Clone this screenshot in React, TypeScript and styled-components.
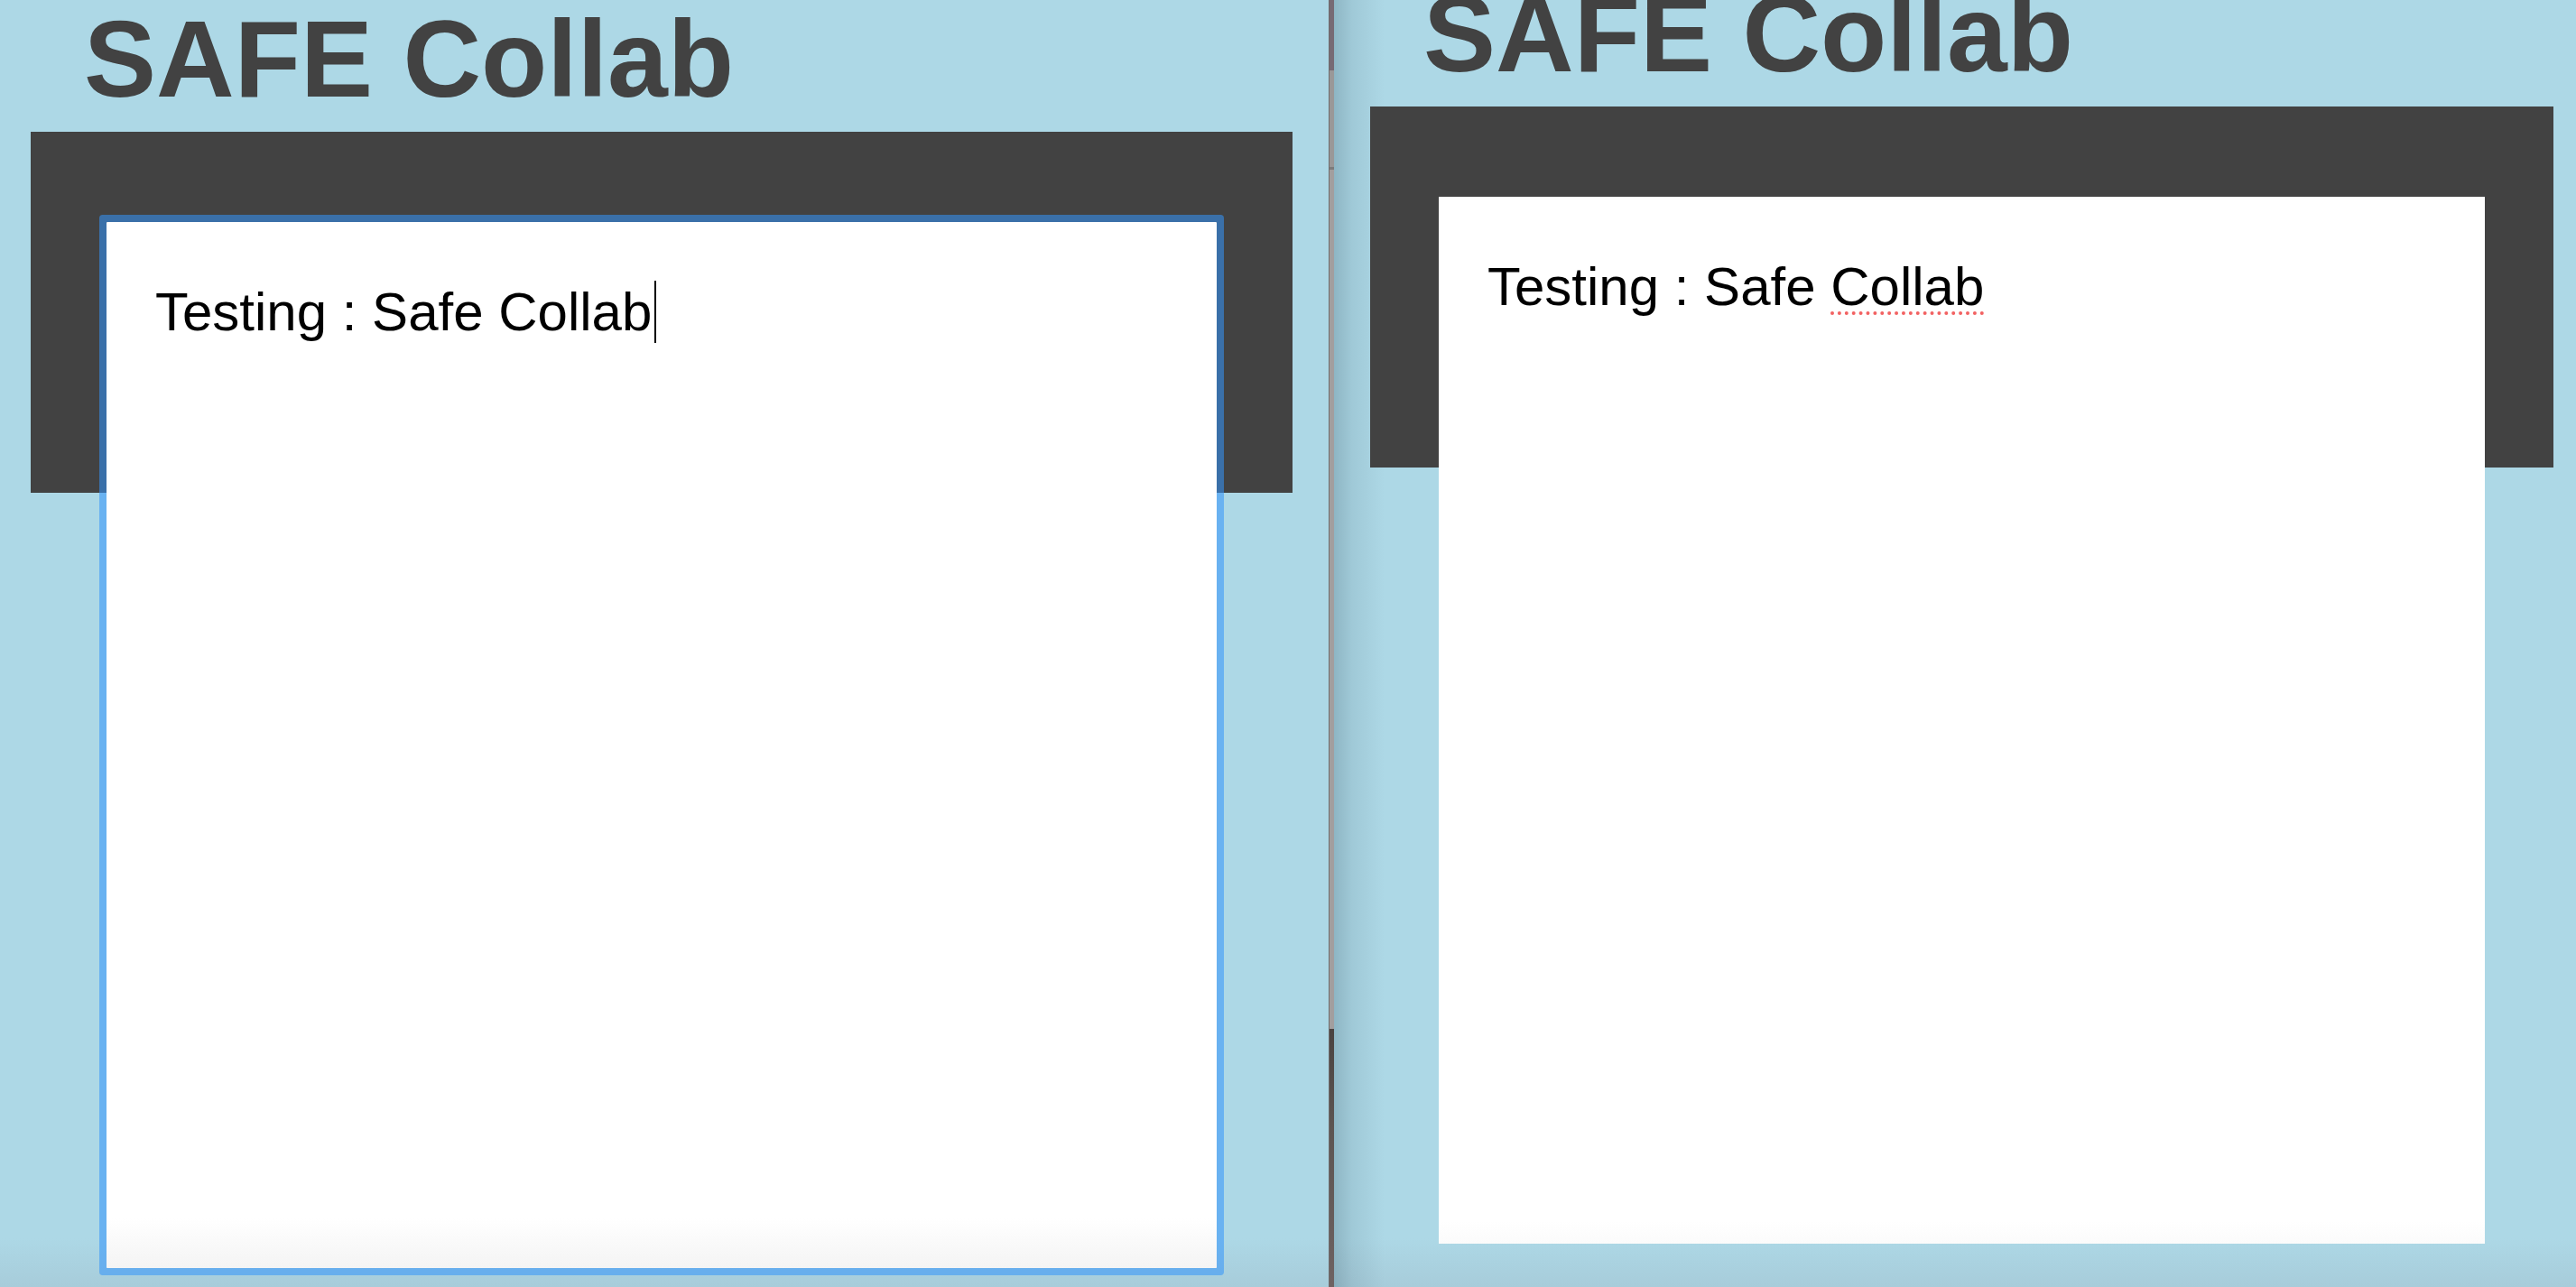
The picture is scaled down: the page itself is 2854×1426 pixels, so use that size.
import React from "react";
import styled, { createGlobalStyle, css } from "styled-components";

const GlobalStyle = createGlobalStyle`
  html, body {
    margin: 0;
    padding: 0;
  }
  body {
    width: 2854px;
    height: 1426px;
    overflow: hidden;
    background: linear-gradient(to bottom, #add8e6 0, #add8e6 1372px, #a7ccda 1426px);
    font-family: "Liberation Sans", Arial, Helvetica, sans-serif;
  }
  * { box-sizing: border-box; }
`;

const Screen = styled.div`
  display: flex;
  width: 2854px;
  height: 1426px;
  overflow: hidden;
`;

const Pane = styled.section<{ $side: "left" | "right" }>`
  display: flex;
  flex-direction: column;
  height: 100%;
  overflow: hidden;
  ${(p) =>
    p.$side === "left"
      ? css`
          width: 1472px;
          flex: none;
          padding: 0 0 0 34px;
        `
      : css`
          flex: 1;
          padding: 0 0 0 40px;
          background: linear-gradient(
            to right,
            rgba(0, 25, 40, 0.18) 0,
            rgba(0, 25, 40, 0.08) 20px,
            rgba(0, 25, 40, 0) 56px
          );
        `}
`;

const Divider = styled.div`
  flex: none;
  width: 6px;
  height: 100%;
  border-left: 1px solid #6f6b6b;
  background: linear-gradient(
    to bottom,
    #776a74 0,
    #776a74 78px,
    #9a9898 78px,
    #9a9898 185px,
    #7d7b7b 185px,
    #7d7b7b 188px,
    #a29e9e 188px,
    #a29e9e 1140px,
    #4a4240 1140px,
    #5d5552 1250px,
    #6e6262 1426px
  );
`;

const Title = styled.h1<{ $scroll: number }>`
  flex: none;
  margin: ${(p) => 5 - p.$scroll}px 0 21px 59px;
  font-size: 120px;
  line-height: 120px;
  font-weight: 700;
  color: #424242;
  white-space: nowrap;
`;

const Stage = styled.div<{ $width: number; $inset: number }>`
  flex: none;
  width: ${(p) => p.$width}px;
  height: 400px;
  background: #424242;
  padding: 100px ${(p) => p.$inset}px 0;
`;

const Editor = styled.div<{ $focused?: boolean; $height: number; $fade: string; $fadeLen: number }>`
  width: 100%;
  height: ${(p) => p.$height}px;
  padding: 65px 54px 0;
  background: linear-gradient(
    to bottom,
    #ffffff 0,
    #ffffff calc(100% - ${(p) => p.$fadeLen}px),
    ${(p) => p.$fade} 100%
  );
  color: #000;
  font-size: 60px;
  line-height: 69px;
  white-space: pre;
  ${(p) =>
    p.$focused &&
    css`
      border-radius: 1px;
      box-shadow: 0 0 0 8px rgba(52, 148, 250, 0.56);
    `}
`;

const Caret = styled.span`
  display: inline-block;
  width: 2px;
  height: 69px;
  margin-left: 3px;
  vertical-align: top;
  background: #000;
`;

const Misspelled = styled.span`
  text-decoration: underline dotted #f26262;
  text-decoration-thickness: 4px;
  text-underline-offset: 7px;
  text-decoration-skip-ink: none;
`;

export default function App() {
  return (
    <>
      <GlobalStyle />
      <Screen>
        <Pane $side="left">
          <Title $scroll={0}>SAFE Collab</Title>
          <Stage $width={1398} $inset={84}>
            <Editor $focused $height={1159} $fade="#f4f4f4" $fadeLen={55}>
              Testing : Safe Collab
              <Caret />
            </Editor>
          </Stage>
        </Pane>
        <Divider />
        <Pane $side="right">
          <Title $scroll={28}>SAFE Collab</Title>
          <Stage $width={1311} $inset={76}>
            <Editor $height={1160} $fade="#fbfbfb" $fadeLen={25}>
              Testing : Safe <Misspelled>Collab</Misspelled>
            </Editor>
          </Stage>
        </Pane>
      </Screen>
    </>
  );
}
